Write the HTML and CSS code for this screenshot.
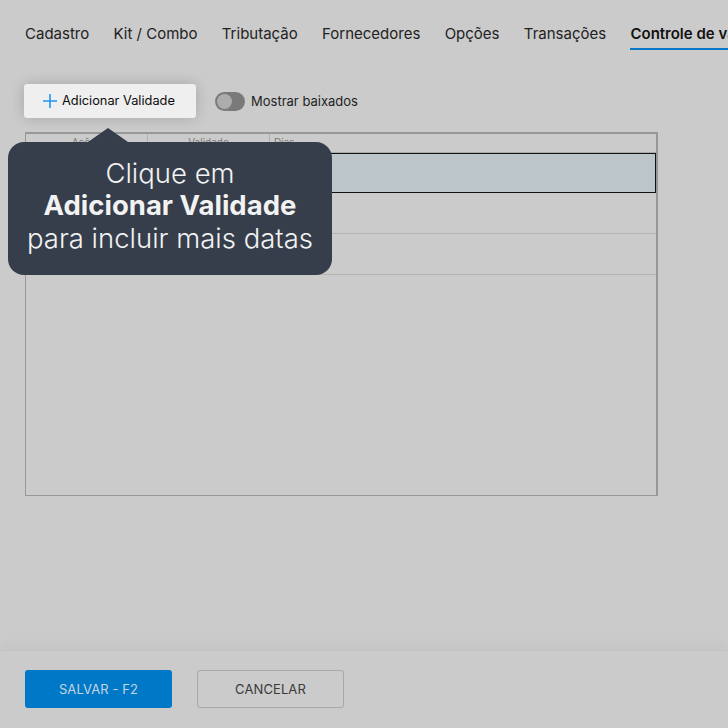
FILE: index.html
```html
<!DOCTYPE html>
<html lang="pt-BR">
<head>
<meta charset="utf-8">
<link rel="stylesheet" href="styles.css">
</head>
<body>
<div class="page">
  <nav class="tabs">
    <span class="tab">Cadastro</span>
    <span class="tab">Kit / Combo</span>
    <span class="tab">Tributação</span>
    <span class="tab">Fornecedores</span>
    <span class="tab">Opções</span>
    <span class="tab">Transações</span>
    <span class="tab active">Controle de validade</span>
  </nav>
  <main class="main">
    <div class="toolbar">
      <button class="add-btn">
        <svg class="plus" width="14" height="14" viewBox="0 0 14 14"><path d="M7 0V14M0 7H14" stroke="#2196f3" stroke-width="1.6"/></svg>
        <span>Adicionar Validade</span>
      </button>
      <label class="toggle-wrap">
        <span class="toggle"><span class="knob"></span></span>
        <span class="toggle-label">Mostrar baixados</span>
      </label>
    </div>
    <div class="grid">
      <div class="grid-head">
        <div class="hcell c1">Ações</div>
        <div class="hcell c2">Validade</div>
        <div class="hcell c3">Dias</div>
      </div>
      <div class="row selected"></div>
      <div class="row"></div>
      <div class="row"></div>
    </div>
    <div class="tooltip">
      <div class="arrow"></div>
      <p>Clique em<br><strong>Adicionar Validade</strong><br>para incluir mais datas</p>
    </div>
  </main>
  <footer class="footer">
    <button class="btn primary">SALVAR - F2</button>
    <button class="btn secondary">CANCELAR</button>
  </footer>
</div>
</body>
</html>
```
FILE: styles.css
```css
* { box-sizing: border-box; }
html, body { margin: 0; padding: 0; }
body {
  background: #cbcbcb;
  font-family: Inter, "Noto Sans", "Liberation Sans", sans-serif;
  color: #1f1f1f;
  width: 728px;
  height: 728px;
  overflow: hidden;
}
.page {
  height: 728px;
  display: flex;
  flex-direction: column;
}
.tabs {
  display: flex;
  gap: 24.3px;
  padding: 24px 0 0 25px;
  height: 50px;
  white-space: nowrap;
  overflow: hidden;
}
.tab {
  font-size: 15px;
  line-height: 20px;
  color: #222;
  height: 26px;
  flex-shrink: 0;
}
.tab.active {
  font-weight: 600;
  color: #111;
  border-bottom: 2px solid #0a78c6;
}
.main {
  flex: 1;
  position: relative;
  padding: 34px 0 0 24px;
}
.toolbar {
  display: flex;
  align-items: center;
  gap: 19px;
  height: 34px;
}
.add-btn {
  display: flex;
  align-items: center;
  gap: 5px;
  width: 172px;
  height: 34px;
  padding: 0 0 1px 19px;
  background: #efefef;
  border: none;
  border-radius: 3px;
  font-family: inherit;
  font-size: 12.8px;
  font-weight: 400;
  color: #0d0d0d;
  box-shadow: 0 0 14px rgba(0,0,0,0.18);
}
.plus { flex-shrink: 0; }
.toggle-wrap {
  display: flex;
  align-items: center;
  gap: 6px;
}
.toggle {
  width: 30px;
  height: 19px;
  border-radius: 10px;
  background: #7a7a7a;
  display: flex;
  align-items: center;
  padding-left: 2px;
}
.knob {
  width: 15px;
  height: 15px;
  border-radius: 50%;
  background: #acacac;
}
.toggle-label {
  font-size: 13px;
  color: #1f1f1f;
}
.grid {
  margin: 14px 0 0 1px;
  width: 633px;
  height: 364px;
  border: 1px solid #989898;
  border-top-width: 2px;
  border-right-width: 2px;
}
.grid-head {
  display: flex;
  height: 19px;
  border-bottom: 1px solid #aaa;
}
.hcell {
  font-size: 10px;
  color: #7a7a7a;
  line-height: 16px;
  border-right: 1px solid #b0b0b0;
}
.c1 { width: 122px; text-align: center; }
.c2 { width: 122px; text-align: center; }
.c3 { flex: 1; padding-left: 4px; border-right: none; }
.row {
  height: 41px;
  border-bottom: 1px solid #b4b4b4;
}
.row.selected {
  height: 40px;
  background: #bbc5ca;
  border: 1px solid #111;
}
.tooltip {
  position: absolute;
  left: 8px;
  top: 92px;
  width: 324px;
  height: 133px;
  background: #363e4c;
  border-radius: 16px;
  display: flex;
  align-items: center;
  justify-content: center;
  padding-bottom: 6px;
}
.arrow {
  position: absolute;
  left: 80px;
  top: -14px;
  width: 0;
  height: 0;
  border-left: 20px solid transparent;
  border-right: 20px solid transparent;
  border-bottom: 14px solid #363e4c;
}
.tooltip p {
  margin: 0;
  text-align: center;
  color: #f2f2f2;
  font-size: 27.5px;
  line-height: 32.5px;
  font-weight: 300;
}
.tooltip strong { font-weight: 700; }
.footer {
  height: 78px;
  display: flex;
  gap: 25px;
  padding: 19px 0 0 25px;
  border-top: 1px solid #c4c4c4;
  box-shadow: 0 -6px 10px rgba(0,0,0,0.03);
}
.btn {
  width: 147px;
  height: 38px;
  border-radius: 3px;
  font-family: inherit;
  font-size: 13px;
  letter-spacing: 0.1px;
}
.primary {
  background: #0078c8;
  color: #c4d4e2;
  border: none;
}
.secondary {
  background: transparent;
  color: #3a3a3a;
  border: 1px solid #a8a8a8;
}
```
